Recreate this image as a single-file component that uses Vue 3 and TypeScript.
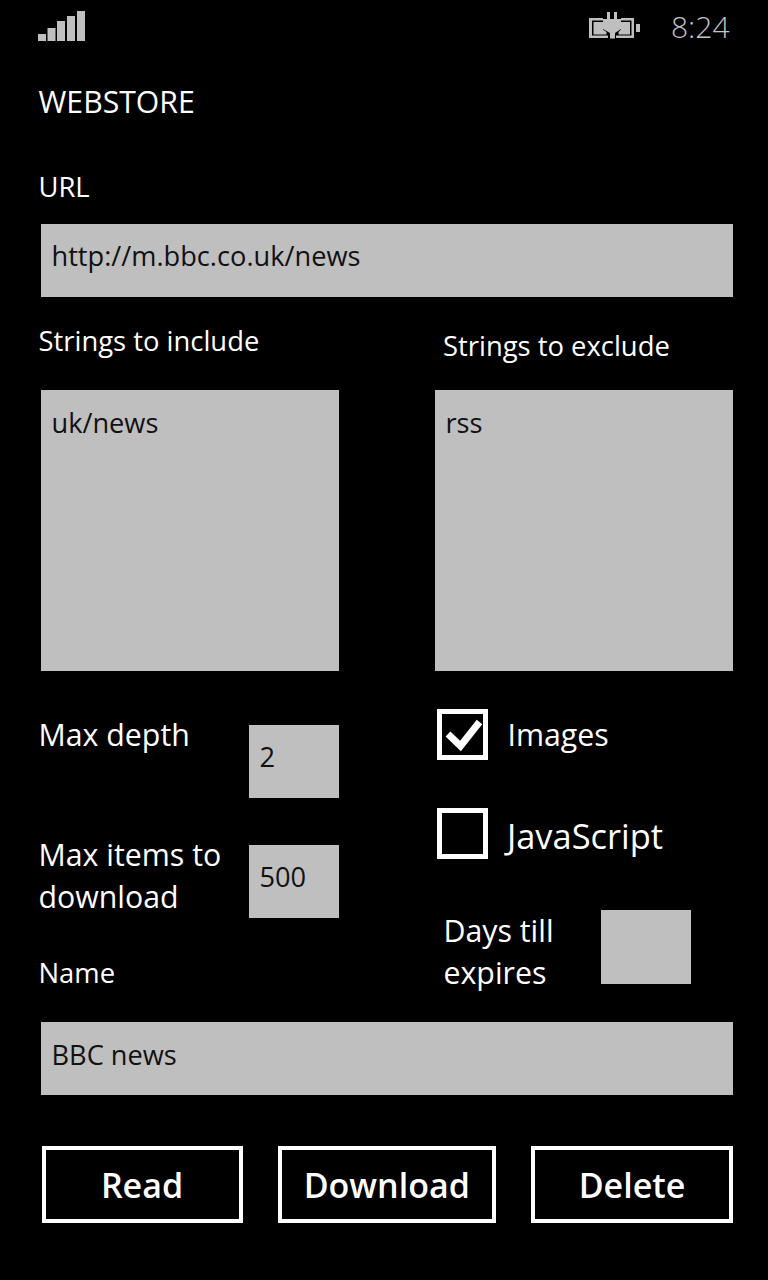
<script setup lang="ts">
const bars = [
  { x: 38, y: 34, h: 7 },
  { x: 47.5, y: 28, h: 13 },
  { x: 57, y: 21, h: 20 },
  { x: 67, y: 16, h: 25 },
  { x: 77, y: 11, h: 30 },
]
</script>

<template>
  <div class="page">
    <header class="status">
      <svg class="signal" width="100" height="50" viewBox="0 0 100 50">
        <rect v-for="b in bars" :key="b.x" :x="b.x" :y="b.y" width="8" :height="b.h" fill="#bfbfbf" />
      </svg>
      <svg class="battery" width="52" height="28" viewBox="0 0 52 28" fill="#bfbfbf">
        <path d="M0 6H14V8.5H3V23.5H19V26H0Z" />
        <path d="M32 6H45V26H27V23.5H42.5V8.5H32Z" />
        <path d="M4.5 10H14V17.5L17.5 20V22.5H4.5Z" />
        <path d="M32 10H41V22.5H29.5V20L32 17.5Z" />
        <path d="M14 7H18V0H21V7H25V0H28V7H32V17L26 21V26.5H21V21L14 17Z" />
        <rect x="47" y="12" width="4" height="8" />
      </svg>
      <span class="time">8:24</span>
    </header>

    <h1 class="title">WEBSTORE</h1>

    <label class="label url-label">URL</label>
    <div class="field url-field">http://m.bbc.co.uk/news</div>

    <section class="strings">
      <div class="col-left">
        <div class="label inc-label">Strings to include</div>
        <div class="field area">uk/news</div>
      </div>
      <div class="col-right">
        <div class="label exc-label">Strings to exclude</div>
        <div class="field area">rss</div>
      </div>
    </section>

    <section class="options">
      <div class="opt-left">
        <div class="opt-row depth">
          <span class="label big">Max depth</span>
          <div class="field small">2</div>
        </div>
        <div class="opt-row items">
          <span class="label big">Max items to<br />download</span>
          <div class="field small">500</div>
        </div>
        <div class="label name-label">Name</div>
      </div>
      <div class="opt-right">
        <div class="check-row">
          <span class="box">
            <svg width="40" height="38" viewBox="0 0 40 38">
              <path d="M5 18 L17.5 30 L36.5 6" fill="none" stroke="#fff" stroke-width="7" />
            </svg>
          </span>
          <span class="label big images">Images</span>
        </div>
        <div class="check-row js">
          <span class="box"></span>
          <span class="label js-text">JavaScript</span>
        </div>
        <div class="days">
          <span class="label big">Days till<br />expires</span>
          <div class="field small days-field"></div>
        </div>
      </div>
    </section>

    <div class="field name-field">BBC news</div>

    <footer class="buttons">
      <button class="btn read">Read</button>
      <button class="btn download">Download</button>
      <button class="btn delete">Delete</button>
    </footer>
  </div>
</template>

<style>
html, body { margin: 0; background: #000; }
</style>

<style scoped>
.page {
  width: 768px;
  height: 1280px;
  background: #000;
  color: #fff;
  font-family: "Open Sans", "Noto Sans", sans-serif;
  overflow: hidden;
  box-sizing: border-box;
}
.status {
  height: 56px;
  display: flex;
  align-items: flex-start;
  position: relative;
}
.battery { margin: 12px 0 0 489px; }
.time {
  margin-left: 30px;
  margin-top: 7px;
  font-size: 30px;
  line-height: 40px;
  color: #c4c4c4;
  font-weight: 300;
}
.title {
  margin: 24px 0 0 38.5px;
  font-size: 30.2px;
  line-height: 44px;
  font-weight: 400;
}
.label {
  display: block;
  font-size: 27.4px;
  line-height: 40px;
}
.big { font-size: 30.3px; line-height: 42px; }
.url-label { margin: 43px 0 0 38.5px; }
.field {
  background: #bfbfbf;
  color: #111;
  font-size: 27.2px;
  line-height: 38px;
  box-sizing: border-box;
  padding: 13px 10px 0 10.5px;
}
.url-field { margin: 17px 35px 0 41px; height: 73px; }
.strings {
  display: grid;
  grid-template-columns: 301px 298px;
  column-gap: 96px;
  margin: 24px 35px 0 38px;
}
.inc-label { height: 69px; padding-left: 0.5px; }
.exc-label { height: 69px; padding-top: 5px; box-sizing: border-box; margin-left: 8px; }
.col-left .area { margin-left: 3px; }
.area { height: 281px; padding-top: 14px; }
.options {
  display: grid;
  grid-template-columns: 301px 298px;
  column-gap: 96px;
  margin: 38px 35px 0 38px;
}
.opt-row { display: flex; justify-content: space-between; padding-left: 0.5px; }
.depth { margin-top: 5px; }
.items { margin-top: 36.5px; }
.small { width: 90px; height: 73px; margin-top: 10.5px; padding-top: 13.5px; }
.name-label { margin: 34.5px 0 0 0.5px; }
.check-row { display: flex; align-items: center; margin-left: 2px; }
.box {
  width: 51px;
  height: 51px;
  box-sizing: border-box;
  border: 5px solid #fff;
  display: flex;
  align-items: center;
  justify-content: center;
}
.images { margin-left: 19.5px; }
.js { margin-top: 48px; }
.js-text { margin: 4px 0 0 19px; font-size: 34.4px; line-height: 46px; }
.days {
  display: flex;
  gap: 47px;
  margin: 51px 0 0 8.5px;
}
.days-field { margin-top: 0; height: 74px; }
.name-field { margin: 28px 35px 0 41px; height: 73px; padding-top: 14px; }
.buttons {
  display: flex;
  justify-content: space-between;
  margin: 51px 35px 0 41.5px;
}
.btn {
  height: 76.5px;
  background: #000;
  color: #fff;
  border: 4.5px solid #fff;
  font: 600 34px "Open Sans", "Noto Sans", sans-serif;
  padding: 1px 0 0;
}
.read { width: 201px; }
.download { width: 218px; }
.delete { width: 202px; }
</style>
